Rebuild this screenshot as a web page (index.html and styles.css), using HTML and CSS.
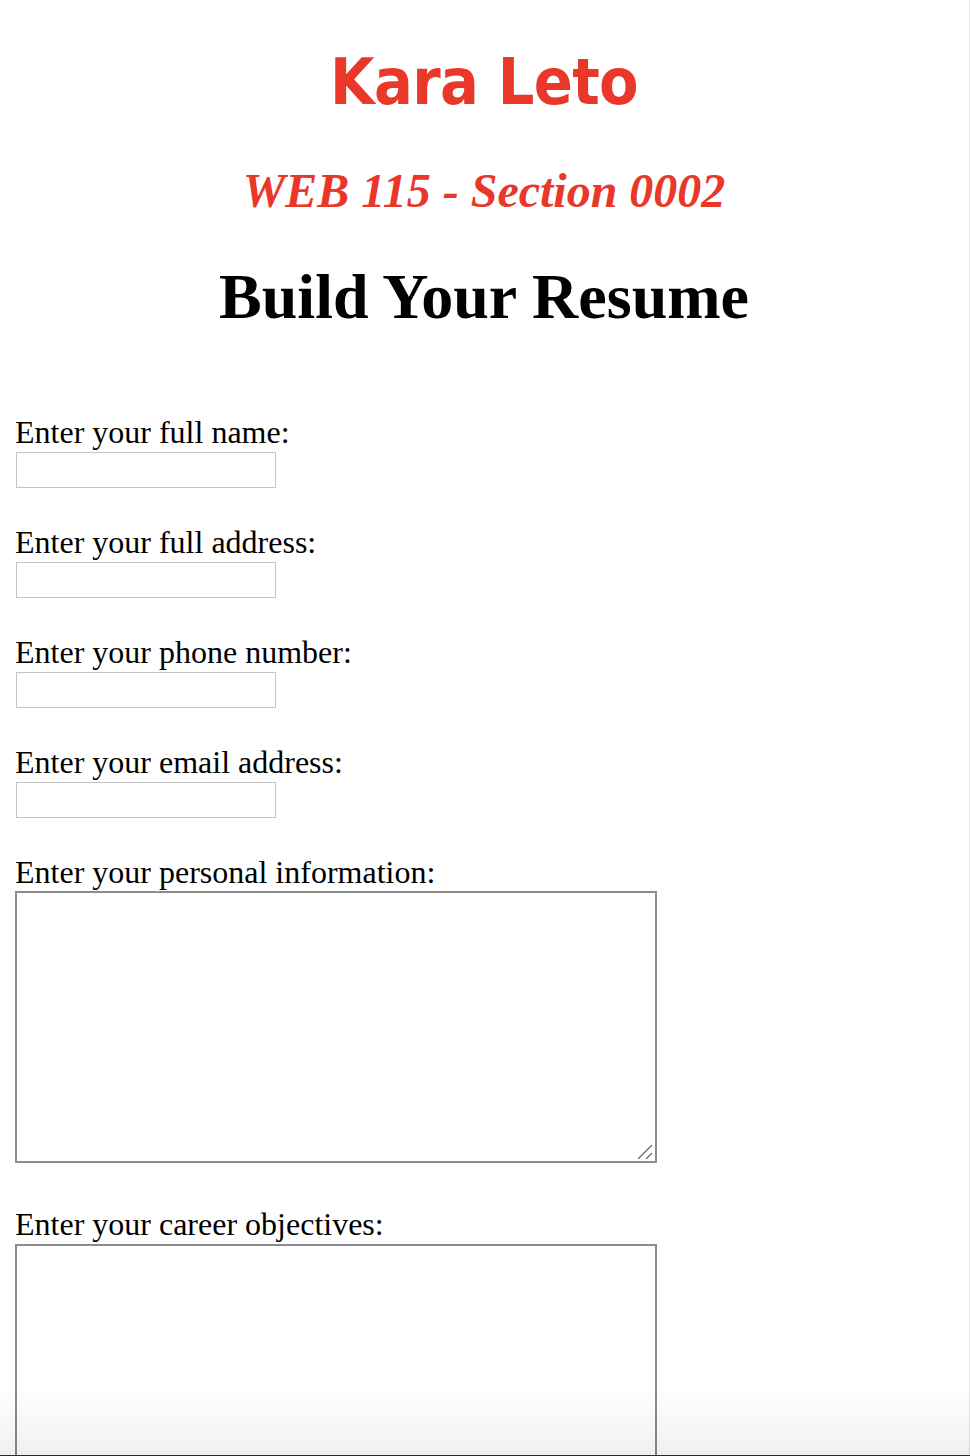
FILE: index.html
```html
<!DOCTYPE html>
<html lang="en">
<head>
<meta charset="utf-8">
<title>Build Your Resume</title>
<link rel="stylesheet" href="styles.css">
</head>
<body>
<header class="masthead">
  <h1 class="name">Kara Leto</h1>
  <h2 class="course">WEB 115 - Section 0002</h2>
  <h1 class="title">Build Your Resume</h1>
</header>
<form class="resume-form">
  <div class="field">
    <label class="label" for="fullname">Enter your full name:</label>
    <input class="text-input" type="text" id="fullname">
  </div>
  <div class="field">
    <label class="label" for="address">Enter your full address:</label>
    <input class="text-input" type="text" id="address">
  </div>
  <div class="field">
    <label class="label" for="phone">Enter your phone number:</label>
    <input class="text-input" type="text" id="phone">
  </div>
  <div class="field">
    <label class="label" for="email">Enter your email address:</label>
    <input class="text-input" type="text" id="email">
  </div>
  <div class="field field-area">
    <label class="label" for="personal">Enter your personal information:</label>
    <div class="area-wrap">
      <textarea class="text-area" id="personal"></textarea>
      <svg class="grip" width="18" height="18" viewBox="0 0 18 18" aria-hidden="true">
        <path d="M2.5 15.5 L15.5 2.5 M10.5 15.5 L15.5 10.5" stroke="#6a6a6a" stroke-width="1.3" stroke-linecap="round" fill="none"/>
      </svg>
    </div>
  </div>
  <div class="field field-area">
    <label class="label label-tight" for="career">Enter your career objectives:</label>
    <div class="area-wrap">
      <textarea class="text-area" id="career"></textarea>
      <svg class="grip" width="18" height="18" viewBox="0 0 18 18" aria-hidden="true">
        <path d="M2.5 15.5 L15.5 2.5 M10.5 15.5 L15.5 10.5" stroke="#6a6a6a" stroke-width="1.3" stroke-linecap="round" fill="none"/>
      </svg>
    </div>
  </div>
</form>
<div class="edge-right"></div>
<div class="fade-bottom"></div>
</body>
</html>
```

FILE: styles.css
```css
html, body {
  margin: 0;
  padding: 0;
  background: #ffffff;
}

body {
  font-family: "Liberation Serif", "Times New Roman", serif;
  color: #000000;
  padding: 0 18px 200px 16px;
}

.masthead {
  display: flex;
  flex-direction: column;
  align-items: center;
  text-align: center;
}

.name {
  margin: 50px 0 0 0;
  font-family: "DejaVu Sans Condensed", "DejaVu Sans", Verdana, sans-serif;
  font-stretch: condensed;
  font-weight: bold;
  font-size: 64px;
  line-height: 64px;
  letter-spacing: -0.6px;
  color: #e9372a;
}

.course {
  margin: 53px 0 0 0;
  font-family: "Liberation Serif", "Times New Roman", serif;
  font-style: italic;
  font-weight: bold;
  font-size: 48px;
  line-height: 48px;
  color: #e9372a;
}

.title {
  margin: 50px 0 0 0;
  font-family: "Liberation Serif", "Times New Roman", serif;
  font-weight: bold;
  font-size: 64px;
  line-height: 64px;
  color: #000000;
}

.resume-form {
  display: flex;
  flex-direction: column;
  margin-top: 85px;
}

.field {
  display: flex;
  flex-direction: column;
  align-items: flex-start;
  margin-bottom: 36px;
}

.field-area {
  margin-bottom: 43px;
}

.label {
  display: block;
  font-size: 32px;
  line-height: 37px;
  height: 37px;
  margin-left: -1px;
}

.label-tight {
  margin-bottom: 1px;
}

.text-input {
  box-sizing: border-box;
  display: block;
  width: 260px;
  height: 36px;
  margin: 1px 0 0 0;
  padding: 2px 4px;
  border: 1px solid #c4c4c4;
  border-radius: 0;
  background: #ffffff;
  font-size: 16px;
  outline: none;
}

.area-wrap {
  position: relative;
  margin-left: -1px;
}

.text-area {
  box-sizing: border-box;
  display: block;
  width: 642px;
  height: 272px;
  margin: 0;
  padding: 2px;
  border: 2px solid #8c8c8c;
  border-radius: 0;
  background: #ffffff;
  font-size: 16px;
  outline: none;
  resize: none;
}

.grip {
  position: absolute;
  right: 3px;
  bottom: 2px;
  pointer-events: none;
}

.edge-right {
  position: fixed;
  top: 0;
  right: 0;
  width: 1px;
  height: 100%;
  background: #e2e2e2;
}

.fade-bottom {
  position: fixed;
  left: 0;
  right: 0;
  bottom: 0;
  height: 66px;
  background: linear-gradient(to bottom, rgba(0, 0, 0, 0), rgba(0, 0, 0, 0.06));
  border-bottom: 1px solid #2a2a2a;
  pointer-events: none;
}
```
